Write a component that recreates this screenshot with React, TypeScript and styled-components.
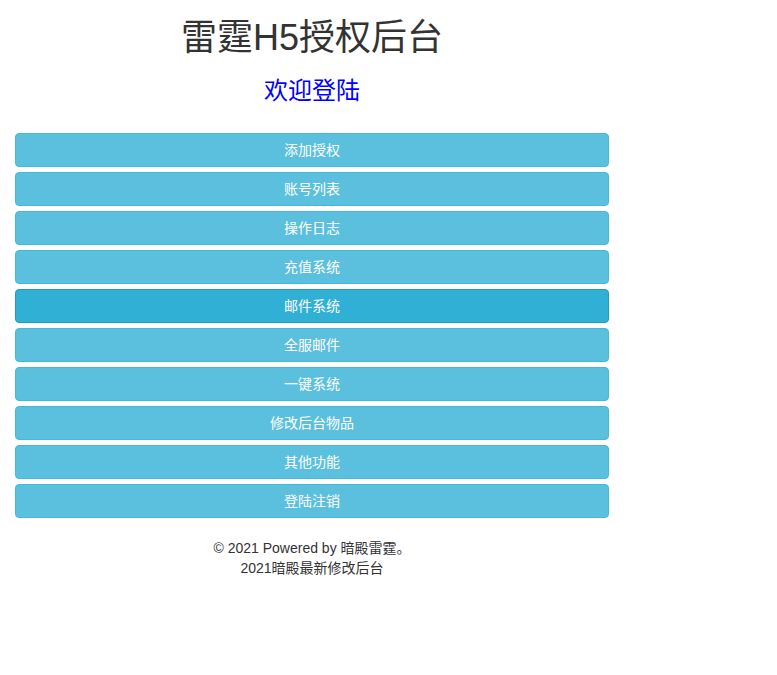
import React from 'react';
import styled, { createGlobalStyle } from 'styled-components';

// --- Global ---

const GlobalStyle = createGlobalStyle`
  html, body {
    margin: 0;
    padding: 0;
    background: #fff;
  }
  body {
    font-family: "Liberation Sans", Arial, "Noto Sans CJK SC", sans-serif;
    font-size: 14px;
    line-height: 1.42857;
    color: #333;
  }
`;

// --- Styled Components ---

const Column = styled.div`
  width: 624px;
  padding: 0 15px;
  box-sizing: border-box;
`;

const Title = styled.h1`
  margin: 18px 0 0;
  font-size: 36px;
  font-weight: 400;
  line-height: 1.1;
  text-align: center;
  color: #333;
`;

const Welcome = styled.h3`
  margin: 20px 0 0;
  font-size: 24px;
  font-weight: 400;
  line-height: 1.1;
  text-align: center;
  color: #0000ff;
`;

const Menu = styled.div`
  display: flex;
  flex-direction: column;
  gap: 5px;
  margin-top: 29px;
`;

const MenuButton = styled.a<{ $active?: boolean }>`
  display: block;
  height: 34px;
  box-sizing: border-box;
  padding: 6px 12px;
  font-size: 14px;
  line-height: 20px;
  text-align: center;
  color: #fff;
  text-decoration: none;
  border-radius: 4px;
  border: 1px solid ${p => (p.$active ? '#269abc' : '#46b8da')};
  background: ${p => (p.$active ? '#31b0d5' : '#5bc0de')};
  cursor: pointer;

  &:hover {
    background: #31b0d5;
    border-color: #269abc;
  }
`;

const Footer = styled.div`
  margin-top: 20px;
  text-align: center;
  font-size: 14px;
  line-height: 20px;
  color: #333;
`;

const items = [
  '添加授权',
  '账号列表',
  '操作日志',
  '充值系统',
  '邮件系统',
  '全服邮件',
  '一键系统',
  '修改后台物品',
  '其他功能',
  '登陆注销',
];

// --- Main Component ---

const App: React.FC = () => {
  return (
    <>
      <GlobalStyle />
      <Column>
        <Title>雷霆H5授权后台</Title>
        <Welcome>欢迎登陆</Welcome>
        <Menu>
          {items.map(label => (
            <MenuButton key={label} $active={label === '邮件系统'}>
              {label}
            </MenuButton>
          ))}
        </Menu>
        <Footer>
          <div>© 2021 Powered by 暗殿雷霆。</div>
          <div>2021暗殿最新修改后台</div>
        </Footer>
      </Column>
    </>
  );
};

export default App;
